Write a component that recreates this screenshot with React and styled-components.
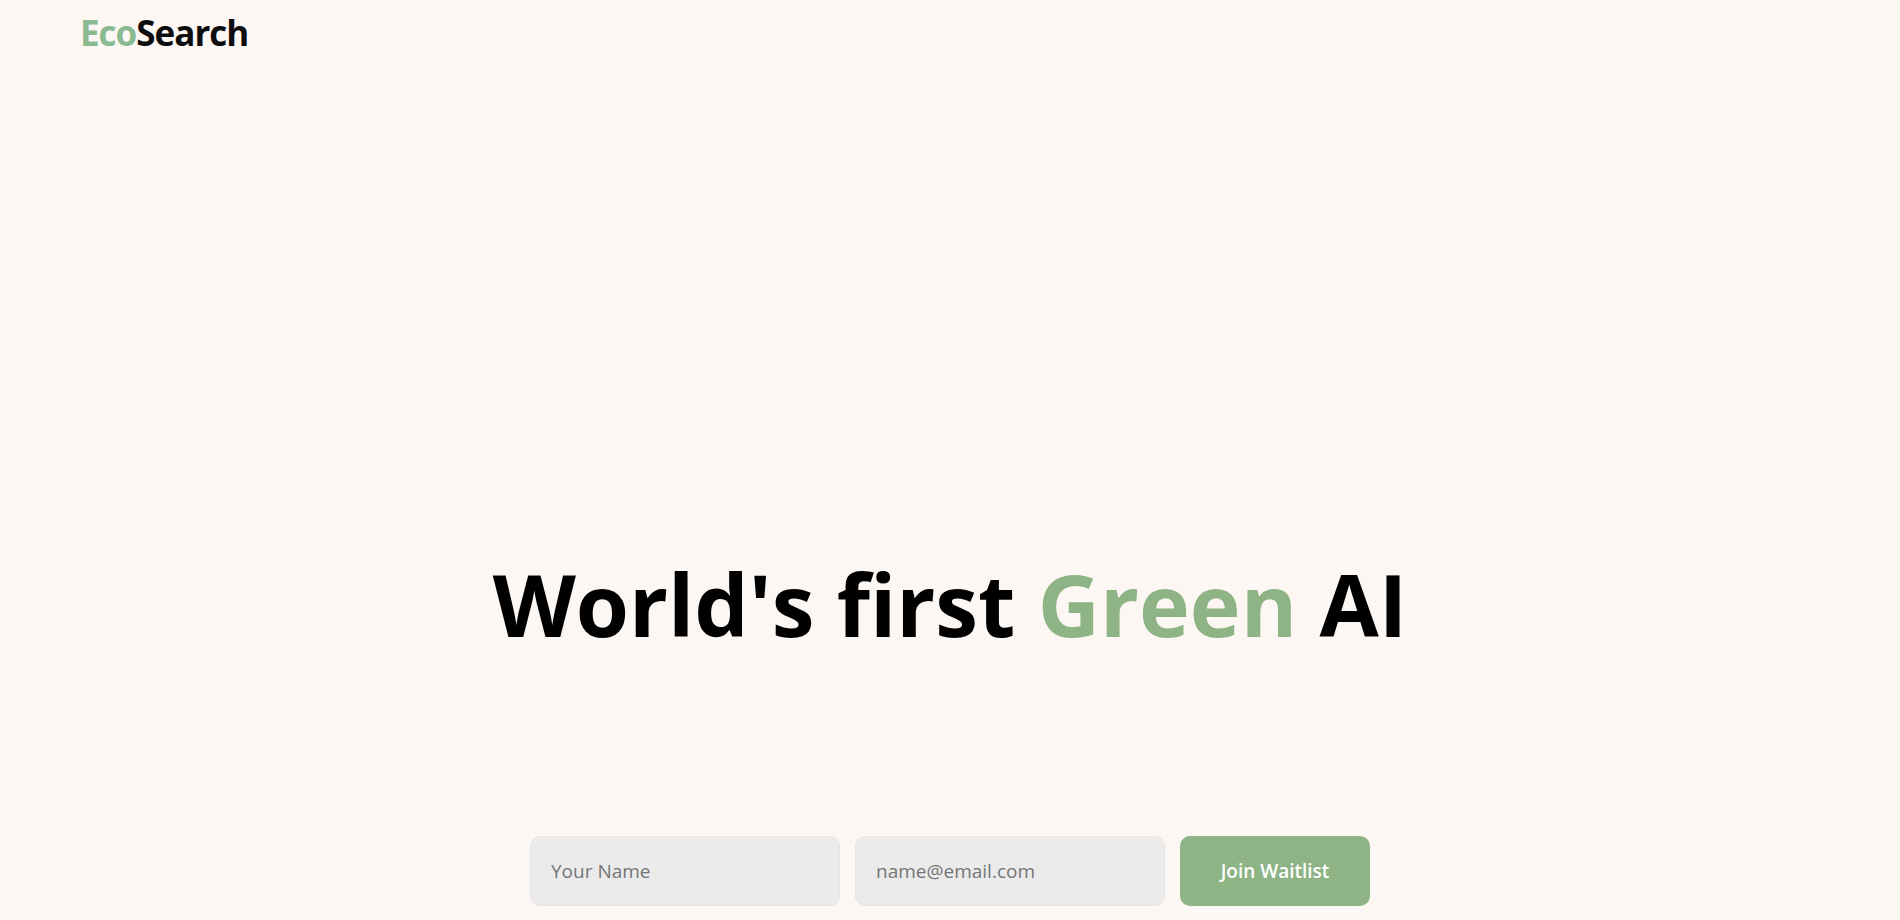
import React from "react";
import styled, { createGlobalStyle } from "styled-components";

const GlobalStyle = createGlobalStyle`
  * { box-sizing: border-box; }
  body {
    margin: 0;
    background: #fdf7f3;
    color: #000;
    font-family: "Open Sans", "Noto Sans", sans-serif;
  }
`;

const Page = styled.div`
  min-height: 100vh;
  display: flex;
  flex-direction: column;
`;

const Header = styled.header`
  height: 66px;
  padding: 0 80px;
  display: flex;
  align-items: center;
`;

const Logo = styled.a`
  font-size: 35px;
  line-height: 48px;
  font-weight: 700;
  letter-spacing: -1px;
  color: #0d0d0d;
  text-decoration: none;
`;

const LogoAccent = styled.span`
  color: #8aba92;
`;

const Accent = styled.span`
  color: #8eb486;
`;

const Main = styled.main`
  flex: 1;
  display: flex;
  flex-direction: column;
  align-items: center;
  justify-content: flex-end;
  gap: 172px;
  padding-bottom: 14px;
`;

const Title = styled.h1`
  margin: 0;
  font-size: 86px;
  line-height: 120px;
  font-weight: 700;
  text-align: center;
`;

const Form = styled.form`
  display: flex;
  gap: 15px;
`;

const Field = styled.input`
  width: 310px;
  height: 70px;
  padding: 0 20px;
  border: 1px solid #e5e5e5;
  border-radius: 10px;
  background: #ebebeb;
  font-family: inherit;
  font-size: 19px;
  &::placeholder { color: #757575; opacity: 1; }
`;

const Submit = styled.button`
  width: 190px;
  height: 70px;
  border: 0;
  border-radius: 10px;
  background: #8eb486;
  color: #fff;
  font-family: inherit;
  font-size: 19px;
  font-weight: 600;
`;

export default function App() {
  return (
    <Page>
      <GlobalStyle />
      <Header>
        <Logo href="#"><LogoAccent>Eco</LogoAccent>Search</Logo>
      </Header>
      <Main>
        <Title>World's first <Accent>Green</Accent> AI</Title>
        <Form onSubmit={(e) => e.preventDefault()}>
          <Field type="text" aria-label="Your Name" placeholder="Your Name" />
          <Field type="email" aria-label="Email" placeholder="name@email.com" />
          <Submit type="submit">Join Waitlist</Submit>
        </Form>
      </Main>
    </Page>
  );
}
